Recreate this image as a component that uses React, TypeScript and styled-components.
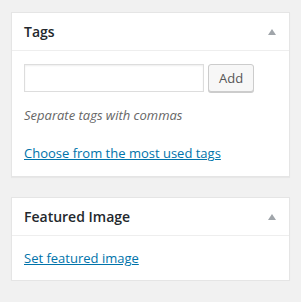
import React from "react";
import styled, { createGlobalStyle } from "styled-components";

const Global = createGlobalStyle`
  html, body { margin: 0; padding: 0; background: #f1f1f1; }
  body { font-family: "Open Sans", "Noto Sans", sans-serif; font-size: 13px; color: #444; }
`;

const Page = styled.div`
  display: flex;
  flex-direction: column;
  gap: 20px;
  padding: 12px 11px 0 11px;
  width: 279px;
`;

const Box = styled.div`
  background: #fff;
  border: 1px solid #e5e5e5;
  box-shadow: 0 1px 1px rgba(0, 0, 0, 0.04);
`;

const Header = styled.div`
  display: flex;
  align-items: center;
  justify-content: space-between;
  height: 37px;
  padding: 0 12px;
  border-bottom: 1px solid #eee;
`;

const Title = styled.h3`
  margin: 0;
  font-size: 14px;
  font-weight: 600;
  color: #23282d;
  line-height: 1.4;
`;

const Arrow = styled.span`
  width: 0;
  height: 0;
  border-left: 4px solid transparent;
  border-right: 4px solid transparent;
  border-bottom: 6px solid #a0a5aa;
  margin-right: 1px;
`;

const Inside = styled.div<{ $pt: number; $pb: number }>`
  display: flex;
  flex-direction: column;
  align-items: flex-start;
  padding: ${(p) => p.$pt}px 12px ${(p) => p.$pb}px;
`;

const Row = styled.div`
  display: flex;
  gap: 4px;
`;

const Input = styled.input`
  box-sizing: border-box;
  width: 180px;
  height: 28px;
  margin: 0;
  border: 1px solid #ddd;
  box-shadow: inset 0 1px 2px rgba(0, 0, 0, 0.07);
  font: inherit;
  outline: none;
`;

const Button = styled.button`
  box-sizing: border-box;
  height: 28px;
  padding: 0 10px;
  margin: 0;
  border: 1px solid #ccc;
  border-radius: 3px;
  background: #f7f7f7;
  box-shadow: 0 1px 0 #ccc;
  color: #555;
  font-family: inherit;
  font-size: 13px;
  line-height: 26px;
`;

const Hint = styled.p`
  margin: 14px 0 0;
  font-style: italic;
  color: #666;
  line-height: 18px;
`;

const Link = styled.a<{ $mt: number }>`
  margin-top: ${(p) => p.$mt}px;
  color: #0073aa;
  text-decoration: underline;
  line-height: 18px;
`;

export default function App() {
  return (
    <>
      <Global />
      <Page>
        <Box>
          <Header>
            <Title>Tags</Title>
            <Arrow />
          </Header>
          <Inside $pt={13} $pb={14}>
            <Row>
              <Input type="text" />
              <Button>Add</Button>
            </Row>
            <Hint>Separate tags with commas</Hint>
            <Link href="#" $mt={20}>
              Choose from the most used tags
            </Link>
          </Inside>
        </Box>
        <Box>
          <Header>
            <Title>Featured Image</Title>
            <Arrow />
          </Header>
          <Inside $pt={13} $pb={13}>
            <Link href="#" $mt={0}>
              Set featured image
            </Link>
          </Inside>
        </Box>
      </Page>
    </>
  );
}
